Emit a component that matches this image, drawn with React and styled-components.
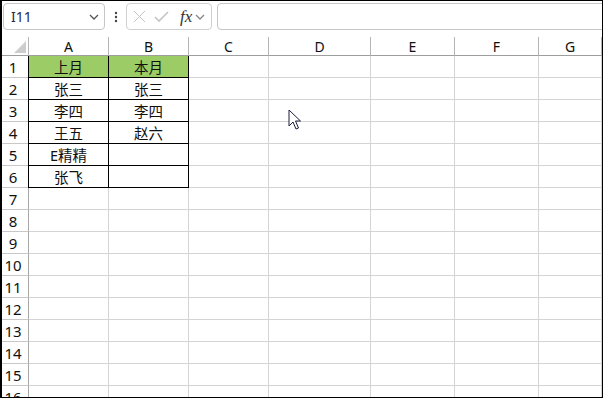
import React from "react";
import styled, { createGlobalStyle } from "styled-components";

const GlobalStyle = createGlobalStyle`
  html, body {
    margin: 0;
    padding: 0;
    background: #fff;
  }
  body {
    font-family: "Noto Sans", "Noto Sans CJK SC", sans-serif;
  }
`;

const columns = ["A", "B", "C", "D", "E", "F", "G"];

const data = [
  ["上月", "本月"],
  ["张三", "张三"],
  ["李四", "李四"],
  ["王五", "赵六"],
  ["E精精", ""],
  ["张飞", ""],
];

const Frame = styled.div`
  position: relative;
  width: 603px;
  height: 398px;
  box-sizing: border-box;
  border: 1px solid #000;
  border-left-width: 2px;
  overflow: hidden;
  display: flex;
  flex-direction: column;
  background: #fff;
`;

const Toolbar = styled.div`
  display: flex;
  align-items: center;
  height: 27px;
  padding: 2px 0 0 1px;
  margin-bottom: 7px;
  flex-shrink: 0;
`;

const NameBox = styled.div`
  box-sizing: border-box;
  width: 102px;
  height: 27px;
  border: 1px solid #c6c6c6;
  border-radius: 4px;
  display: flex;
  align-items: center;
  justify-content: space-between;
  padding: 0 5px 0 7px;
  font-size: 14px;
  color: #1f2a44;
`;

const Dots = styled.div`
  width: 21px;
  display: flex;
  justify-content: center;
`;

const FormulaTools = styled.div`
  box-sizing: border-box;
  width: 86px;
  height: 27px;
  border: 1px solid #d0d0d0;
  border-radius: 4px;
  display: flex;
  align-items: center;
  padding: 0 3px 0 6px;
  gap: 8px;
`;

const Fx = styled.span`
  font-family: "Liberation Serif", "DejaVu Serif", serif;
  font-style: italic;
  font-size: 17px;
  color: #333;
  margin-left: 3px;
  margin-right: -5px;
  line-height: 1;
`;

const FormulaInput = styled.div`
  box-sizing: border-box;
  flex: 1;
  height: 27px;
  margin-left: 5px;
  margin-right: -6px;
  border: 1px solid #c6c6c6;
  border-radius: 4px;
`;

const Sheet = styled.div`
  display: grid;
  grid-template-columns: 27px 80px 80px 80px 102px 84px 84px 1fr;
  grid-template-rows: 19px;
  grid-auto-rows: 22px;
  font-size: 14px;
  color: #111;
`;

const Corner = styled.div`
  position: relative;
  border-right: 1px solid #b5b5b5;
  border-bottom: 1px solid #9e9e9e;
  box-sizing: border-box;
`;

const Triangle = styled.div`
  position: absolute;
  right: 2px;
  bottom: 2px;
  width: 0;
  height: 0;
  border-left: 12px solid transparent;
  border-bottom: 12px solid #cdcdcd;
`;

const ColHead = styled.div`
  box-sizing: border-box;
  border-right: 1px solid #b5b5b5;
  border-bottom: 1px solid #9e9e9e;
  display: flex;
  align-items: center;
  justify-content: center;
  font-size: 14px;
  padding-top: 1px;
`;

const RowHead = styled.div`
  box-sizing: border-box;
  border-right: 1px solid #a8a8a8;
  border-bottom: 1px solid #c8c8c8;
  display: flex;
  align-items: center;
  justify-content: center;
  padding-right: 4px;
  font-size: 15px;
`;

const Cell = styled.div`
  box-sizing: border-box;
  border-right: 1px solid ${(p) => (p.$boxed ? "#000" : "#d4d4d4")};
  border-bottom: 1px solid ${(p) => (p.$boxed ? "#000" : "#d4d4d4")};
  box-shadow: ${(p) => (p.$edge ? "-1px 0 0 #000" : "none")};
  background: ${(p) => (p.$head ? "#9bcc66" : "transparent")};
  display: flex;
  align-items: center;
  justify-content: center;
  font-size: 14.5px;
  white-space: nowrap;
`;

const Pointer = styled.svg`
  position: absolute;
  left: 286px;
  top: 108px;
`;

function Chevron({ color }) {
  return (
    <svg width="10" height="6" viewBox="0 0 10 6">
      <polyline points="1,1 5,5 9,1" fill="none" stroke={color} strokeWidth="1.3" />
    </svg>
  );
}

export default function App() {
  const rows = Array.from({ length: 16 }, (_, i) => i + 1);
  return (
    <>
      <GlobalStyle />
      <Frame>
        <Toolbar>
          <NameBox>
            <span>I11</span>
            <Chevron color="#555" />
          </NameBox>
          <Dots>
            <svg width="4" height="12" viewBox="0 0 4 12">
              <circle cx="2" cy="2" r="1.2" fill="#444" />
              <circle cx="2" cy="6" r="1.2" fill="#444" />
              <circle cx="2" cy="10" r="1.2" fill="#444" />
            </svg>
          </Dots>
          <FormulaTools>
            <svg width="13" height="13" viewBox="0 0 13 13">
              <path d="M1 1 L12 12 M12 1 L1 12" stroke="#c4c4c4" strokeWidth="1" />
            </svg>
            <svg width="15" height="12" viewBox="0 0 15 12">
              <polyline points="1,6 5,10 14,1" fill="none" stroke="#c4c4c4" strokeWidth="1.6" />
            </svg>
            <Fx>fx</Fx>
            <Chevron color="#888" />
          </FormulaTools>
          <FormulaInput />
        </Toolbar>
        <Sheet>
          <Corner>
            <Triangle />
          </Corner>
          {columns.map((c) => (
            <ColHead key={c}>{c}</ColHead>
          ))}
          {rows.map((r) => (
            <React.Fragment key={r}>
              <RowHead>{r}</RowHead>
              {columns.map((c, ci) => {
                const boxed = r <= 6 && ci < 2;
                const text = boxed ? data[r - 1][ci] : "";
                return (
                  <Cell
                    key={c}
                    $boxed={boxed}
                    $edge={boxed && ci === 0}
                    $head={boxed && r === 1}
                  >
                    {text}
                  </Cell>
                );
              })}
            </React.Fragment>
          ))}
        </Sheet>
        <Pointer width="14" height="22" viewBox="0 0 14 22">
          <path
            d="M1 1 L1 17 L5 13 L8 20 L10.5 19 L7.5 12 L12.5 12 Z"
            fill="#fff"
            stroke="#1c1c3c"
            strokeWidth="1"
            strokeLinejoin="round"
          />
        </Pointer>
      </Frame>
    </>
  );
}
